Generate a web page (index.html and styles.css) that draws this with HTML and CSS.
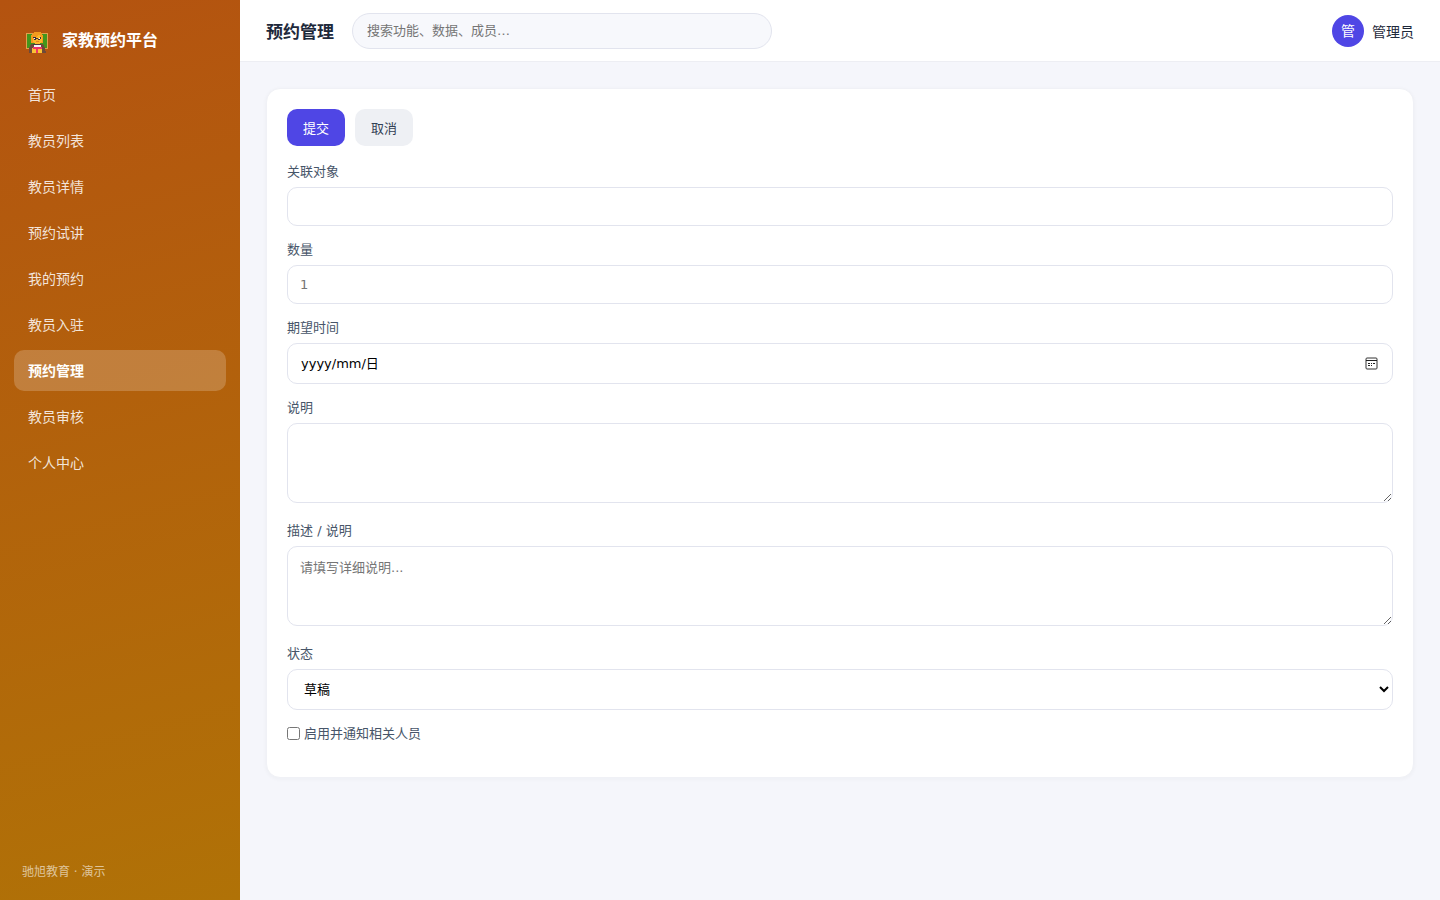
FILE: index.html
```html
<!DOCTYPE html>
<html lang="zh-CN">

<head>
    <meta charset="UTF-8" />
    <meta name="viewport" content="width=device-width, initial-scale=1.0" />
    <link rel="stylesheet" href="styles.css">
    <title>预约管理</title>
</head>

<body>

    <!-- sidebar -->
    <aside class="sidebar">
        <div class="brand">
            <svg class="brand-icon" viewBox="0 0 22 22" shape-rendering="crispEdges" aria-hidden="true">
                <rect x="0" y="1" width="22" height="16" fill="#e0a04c" />
                <rect x="1" y="2" width="20" height="14" fill="#43961c" />
                <path d="M3 21v-5l2-4h12l2 4 1 5z" fill="#6d4a3a" />
                <path d="M6 16h10v5H6z" fill="#fbc234" />
                <path d="M5 11V4l2-3 2-1h4l3 1 1 3v7z" fill="#f39a1e" />
                <path d="M7 5h3l3-2 3 3v3l-2 3H9l-2-3z" fill="#fcb72b" />
                <path d="M7 5h3v1h2v1h3V5h-1v3h-2V7h-2v1H8V6H7z" fill="#3b2d3a" />
                <path d="M8 6h1v1H8zm5 0h1v1h-1z" fill="#ffffff" />
                <path d="M10 9h3v1h-3z" fill="#e98220" />
                <path d="M7 12h8v1H7z" fill="#4b3939" />
                <path d="M8 13h7v2H8z" fill="#f2f5f7" />
                <path d="M7 15h9v2h-4v4h-2v-4H7z" fill="#ef3467" />
            </svg>
            <span>家教预约平台</span>
        </div>
        <nav class="menu">
            <a href="#">首页</a>
            <a href="#">教员列表</a>
            <a href="#">教员详情</a>
            <a href="#">预约试讲</a>
            <a href="#">我的预约</a>
            <a href="#">教员入驻</a>
            <a href="#" class="active">预约管理</a>
            <a href="#">教员审核</a>
            <a href="#">个人中心</a>
        </nav>
        <div class="sidebar-foot">驰旭教育 · 演示</div>
    </aside>

    <div class="main">
        <header class="topbar">
            <h1>预约管理</h1>
            <input class="search" type="search" placeholder="搜索功能、数据、成员…" aria-label="搜索">
            <div class="user">
                <span class="avatar">管</span>
                <span>管理员</span>
            </div>
        </header>

        <main class="content">
            <form class="card">
                <div class="actions">
                    <button type="button" class="btn primary">提交</button>
                    <button type="button" class="btn">取消</button>
                </div>
                <div class="field">
                    <label for="target">关联对象</label>
                    <input class="control" type="text" id="target">
                </div>
                <div class="field">
                    <label for="amount">数量</label>
                    <input class="control" type="number" id="amount" placeholder="1">
                </div>
                <div class="field">
                    <label for="date">期望时间</label>
                    <div class="control date-box">
                        <input type="text" id="date" placeholder="yyyy/mm/日">
                        <button type="button" class="date-btn" aria-label="选择日期">
                            <svg viewBox="0 0 13 13" aria-hidden="true">
                                <rect x="1" y="1" width="11" height="11" rx="1" fill="none" stroke="#333" />
                                <path d="M1 3.5h11" stroke="#222" />
                                <path d="M3 6h2v1H3zm3 0h1v1H6zm2 0h2v1H8zM3 8h2v1H3zm3 0h1v1H6z" fill="#222" />
                            </svg>
                        </button>
                    </div>
                </div>
                <div class="field field-area">
                    <label for="note">说明</label>
                    <textarea class="control" id="note"></textarea>
                </div>
                <div class="field field-area">
                    <label for="desc">描述 / 说明</label>
                    <textarea class="control" id="desc" placeholder="请填写详细说明..."></textarea>
                </div>
                <div class="field">
                    <label for="status">状态</label>
                    <select class="control" id="status">
                        <option>草稿</option>
                    </select>
                </div>
                <div class="check">
                    <input type="checkbox" id="notify">
                    <label for="notify">启用并通知相关人员</label>
                </div>
            </form>
        </main>
    </div>

</body>

</html>
```
FILE: styles.css
```css
:root {
    --primary: #4f46e5;
    --text: #1e293b;
    --label: #475569;
    --line: #e2e4ee;
    --bg: #f5f6fb;
}

* {
    box-sizing: border-box;
}

body {
    margin: 0;
    display: flex;
    min-height: 100vh;
    background-color: var(--bg);
    color: var(--text);
    font-family: 'DejaVu Sans', 'Noto Sans CJK SC', sans-serif;
    font-size: 14px;
}

/* sidebar */
.sidebar {
    display: flex;
    flex-direction: column;
    flex-shrink: 0;
    width: 240px;
    padding: 22px 14px 18px;
    background: linear-gradient(165deg, #b45310, #b07207);
    color: #fff;
}

.brand {
    display: flex;
    align-items: center;
    gap: 14px;
    height: 34px;
    padding: 0 12px;
    margin-bottom: 18px;
    font-size: 16px;
    font-weight: 700;
}

.brand-icon {
    width: 22px;
    height: 22px;
    margin-top: 8px;
}

.menu {
    display: flex;
    flex-direction: column;
    gap: 5px;
}

.menu a {
    padding: 11px 14px 9px;
    border-radius: 10px;
    color: rgba(255, 255, 255, 0.85);
    line-height: 21px;
    text-decoration: none;
}

.menu a.active {
    background-color: rgba(255, 255, 255, 0.2);
    color: #fff;
    font-weight: 700;
}

.sidebar-foot {
    margin-top: auto;
    padding: 0 8px;
    color: rgba(255, 255, 255, 0.6);
    font-size: 12px;
    line-height: 20px;
}

/* top bar */
.main {
    flex: 1;
    min-width: 0;
}

.topbar {
    display: flex;
    align-items: center;
    gap: 18px;
    height: 62px;
    padding: 0 26px;
    background-color: #fff;
    border-bottom: 1px solid #edeef3;
}

.topbar h1 {
    margin: 0;
    font-size: 17px;
}

.search {
    width: 420px;
    height: 36px;
    padding: 0 14px;
    border: 1px solid var(--line);
    border-radius: 18px;
    background-color: #f7f8fc;
    font-family: inherit;
    font-size: 13px;
}

.user {
    display: flex;
    align-items: center;
    gap: 8px;
    margin-left: auto;
}

.avatar {
    width: 32px;
    height: 32px;
    border-radius: 50%;
    background-color: var(--primary);
    color: #fff;
    line-height: 32px;
    text-align: center;
}

/* form */
.content {
    padding: 26px;
}

.card {
    padding: 20px;
    border: 1px solid #f0f1f6;
    border-radius: 14px;
    background-color: #fff;
    box-shadow: 0 1px 4px rgba(30, 41, 59, 0.04);
}

.actions {
    display: flex;
    gap: 10px;
    margin-bottom: 16px;
}

.btn {
    height: 37px;
    padding: 0 16px;
    border: 0;
    border-radius: 10px;
    background-color: #eef0f4;
    color: #334155;
    cursor: pointer;
    font-family: inherit;
    font-size: 13px;
}

.btn.primary {
    background-color: var(--primary);
    color: #fff;
}

.field {
    margin-bottom: 14px;
}

.field-area {
    margin-bottom: 18px;
}

.field label,
.check label {
    color: var(--label);
    font-size: 13px;
    line-height: 19px;
}

.field label {
    display: block;
    margin-bottom: 6px;
}

.control {
    display: block;
    width: 100%;
    height: 39px;
    padding: 10px 12px;
    border: 1px solid var(--line);
    border-radius: 10px;
    background-color: #fff;
    color: #000;
    font-family: inherit;
    font-size: 13px;
}

select.control,
.date-box {
    height: 41px;
}

textarea.control {
    height: 80px;
    resize: vertical;
}

/* date field with its own calendar button */
.date-box {
    display: flex;
    align-items: center;
}

.date-box input {
    flex: 1;
    min-width: 0;
    padding: 0 1px;
    border: 0;
    background: none;
    font-family: inherit;
    font-size: 13px;
}

.date-box input::placeholder {
    color: #000;
}

.date-btn {
    display: flex;
    padding: 2px;
    border: 0;
    background: none;
    cursor: pointer;
}

.date-btn svg {
    width: 13px;
    height: 13px;
}

.check {
    display: flex;
    align-items: center;
    gap: 4px;
    margin-bottom: 14px;
}

.check input {
    width: 13px;
    height: 13px;
    margin: 0;
}
```
